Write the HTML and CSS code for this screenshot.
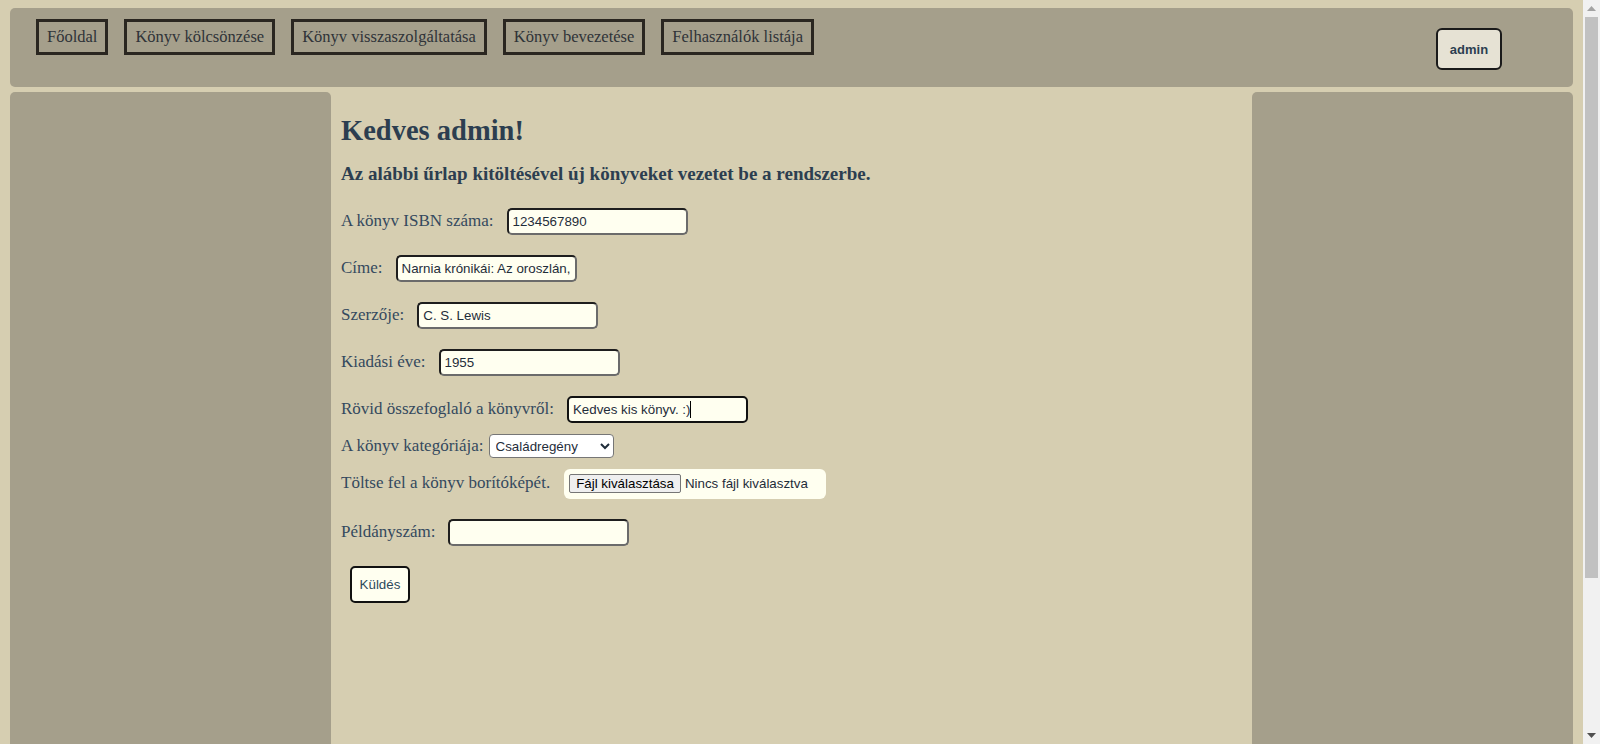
FILE: index.html
```html
<!DOCTYPE html>
<html lang="hu">
<head>
<meta charset="utf-8">
<title>Könyv bevezetése</title>
<link rel="stylesheet" href="styles.css">
</head>
<body>
<header class="topbar">
  <nav class="menu">
    <a class="menu-item" href="#">Főoldal</a>
    <a class="menu-item" href="#">Könyv kölcsönzése</a>
    <a class="menu-item" href="#">Könyv visszaszolgáltatása</a>
    <a class="menu-item" href="#">Könyv bevezetése</a>
    <a class="menu-item" href="#">Felhasználók listája</a>
  </nav>
  <button class="user-btn" type="button">admin</button>
</header>
<div class="columns">
  <aside class="side side-left"></aside>
  <main class="main">
    <h1 class="title">Kedves admin!</h1>
    <h3 class="subtitle">Az alábbi űrlap kitöltésével új könyveket vezetet be a rendszerbe.</h3>
    <form class="book-form">
      <div class="row gap-big">
        <label class="lbl" for="isbn">A könyv ISBN száma:</label>
        <input class="field" id="isbn" type="text" value="1234567890">
      </div>
      <div class="row gap-big">
        <label class="lbl" for="cim">Címe:</label>
        <input class="field" id="cim" type="text" value="Narnia krónikái: Az oroszlán, a boszorkány és a ruhásszekrény">
      </div>
      <div class="row gap-big">
        <label class="lbl" for="szerzo">Szerzője:</label>
        <input class="field" id="szerzo" type="text" value="C. S. Lewis">
      </div>
      <div class="row gap-big">
        <label class="lbl" for="ev">Kiadási éve:</label>
        <input class="field" id="ev" type="text" value="1955">
      </div>
      <div class="row gap-small">
        <label class="lbl" for="leiras">Rövid összefoglaló a könyvről:</label>
        <span class="caret-wrap">
          <input class="field field-focus" id="leiras" type="text" value="Kedves kis könyv. :)">
          <span class="caret"></span>
        </span>
      </div>
      <div class="row gap-small">
        <label class="lbl" for="kat">A könyv kategóriája:</label>
        <select class="select" id="kat">
          <option>Családregény</option>
          <option>Fantasy</option>
          <option>Krimi</option>
        </select>
      </div>
      <div class="row gap-big">
        <label class="lbl">Töltse fel a könyv borítóképét.</label>
        <span class="file">
          <span class="file-btn">Fájl kiválasztása</span>
          <span class="file-text">Nincs fájl kiválasztva</span>
        </span>
      </div>
      <div class="row gap-big">
        <label class="lbl" for="db">Példányszám:</label>
        <input class="field" id="db" type="text" value="">
      </div>
      <div class="row">
        <button class="submit" type="button">Küldés</button>
      </div>
    </form>
  </main>
  <aside class="side side-right"></aside>
</div>
<div class="scrollbar" aria-hidden="true">
  <div class="sb-btn sb-up"><svg width="9" height="5" viewBox="0 0 9 5"><polygon points="0,5 9,5 4.5,0" fill="#a3a3a3"/></svg></div>
  <div class="sb-track">
    <div class="sb-thumb"></div>
  </div>
  <div class="sb-btn sb-down"><svg width="9" height="5" viewBox="0 0 9 5"><polygon points="0,0 9,0 4.5,5" fill="#505050"/></svg></div>
</div>
</body>
</html>
```
FILE: styles.css
```css
html {
  background: #d6ceb1;
}
body {
  margin: 8px 27px 8px 10px;
  background: #d6ceb1;
  font-family: "Liberation Serif", "Times New Roman", serif;
  color: #2c3e50;
}
.scrollbar {
  position: fixed;
  top: 0;
  right: 0;
  width: 17px;
  height: 100vh;
  background: #f1f1f1;
  display: flex;
  flex-direction: column;
}
.sb-btn {
  height: 17px;
  display: flex;
  align-items: center;
  justify-content: center;
  flex: none;
}
.sb-track {
  flex: 1;
  padding: 0 2px;
}
.sb-thumb {
  height: 561px;
  background: #c1c1c1;
}
.topbar {
  height: 79px;
  box-sizing: border-box;
  background: #a59f8b;
  border-radius: 5px;
  padding: 11px 71px 0 26px;
  display: flex;
  justify-content: space-between;
  align-items: flex-start;
}
.menu {
  display: flex;
  gap: 16px;
}
.menu-item {
  display: block;
  height: 36px;
  box-sizing: border-box;
  border: 3px solid #2a2620;
  padding: 0 8px;
  line-height: 30px;
  font-size: 16.5px;
  color: #2f3338;
  text-decoration: none;
}
.user-btn {
  margin-top: 9px;
  width: 66px;
  height: 42px;
  box-sizing: border-box;
  border: 2px solid #1a1a1a;
  border-radius: 6px;
  background: #e6e2d4;
  font-family: "Liberation Sans", Arial, sans-serif;
  font-weight: bold;
  font-size: 13px;
  color: #2c3e50;
  padding: 0;
}
.columns {
  margin-top: 5px;
  display: grid;
  grid-template-columns: 321px 1fr 321px;
  min-height: 838px;
}
.side {
  background: #a59f8b;
  border-radius: 5px 5px 0 0;
}
.main {
  padding: 22px 10px 0 10px;
}
.title {
  margin: 0;
  font-size: 28.5px;
  line-height: 33px;
  font-weight: bold;
  color: #2c3e50;
}
.subtitle {
  margin: 16px 0 0 0;
  font-size: 19px;
  line-height: 22px;
  font-weight: bold;
  color: #2c3e50;
}
.book-form {
  margin-top: 23px;
}
.row {
  display: flex;
  align-items: baseline;
}
.gap-big {
  margin-bottom: 20px;
}
.gap-small {
  margin-bottom: 11px;
}
.lbl {
  font-size: 17px;
  line-height: 19.5px;
  color: #34495e;
}
.field {
  margin-left: 13px;
  width: 181px;
  height: 27px;
  box-sizing: border-box;
  padding: 0 4px;
  border: 2px solid;
  border-color: #1e1e1e #6b6b6b #6b6b6b #1e1e1e;
  border-radius: 5px;
  background: #fffff0;
  font-family: "Liberation Sans", Arial, sans-serif;
  font-size: 13.33px;
  color: #1f2d3a;
  outline: none;
}
.caret-wrap {
  position: relative;
  display: inline-block;
}
.field-focus {
  border-color: #111111;
}
.caret {
  position: absolute;
  left: 136px;
  top: 5px;
  width: 1px;
  height: 17px;
  background: #000;
}
.select {
  margin-left: 5px;
  width: 125px;
  height: 24px;
  box-sizing: border-box;
  border: 1px solid #767676;
  border-radius: 4px;
  background: #ffffff;
  font-family: "Liberation Sans", Arial, sans-serif;
  font-size: 13.33px;
  color: #1f2d3a;
  padding: 0 2px;
}
.file {
  margin-left: 14px;
  display: inline-flex;
  align-items: baseline;
  width: 262px;
  height: 30px;
  box-sizing: border-box;
  padding: 5px;
  background: #fffff0;
  border-radius: 6px;
  font-family: "Liberation Sans", Arial, sans-serif;
  font-size: 13.33px;
  color: #1f2d3a;
}
.file-btn {
  border: 1px solid #767676;
  border-radius: 2px;
  background: #efefef;
  padding: 1px 6px;
  line-height: 15px;
  color: #000;
}
.file-text {
  margin-left: 4px;
}
.submit {
  margin-left: 9px;
  width: 60px;
  height: 37px;
  box-sizing: border-box;
  border: 2px solid #111111;
  border-radius: 5px;
  background: #fffff0;
  font-family: "Liberation Sans", Arial, sans-serif;
  font-size: 13.33px;
  color: #2c4a5c;
  padding: 0;
}
```
